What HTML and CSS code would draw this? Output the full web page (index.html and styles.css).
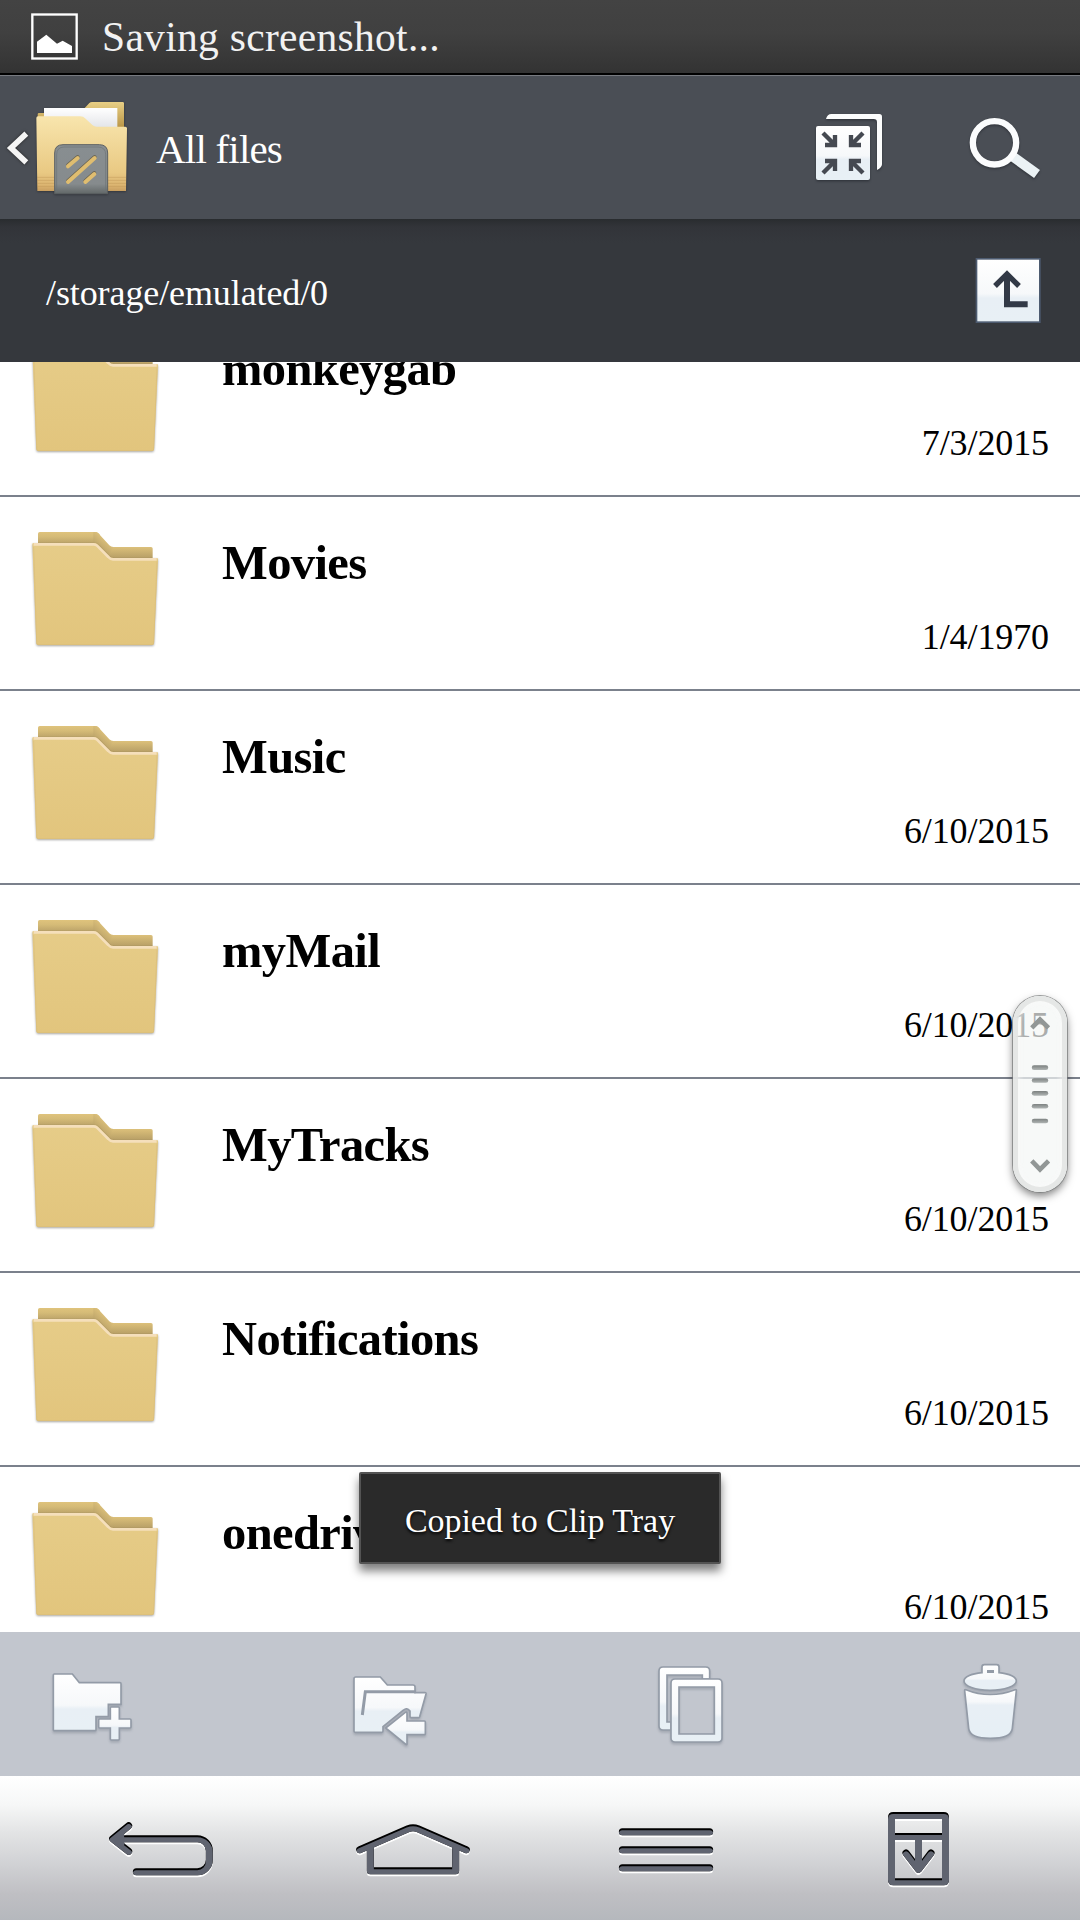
FILE: index.html
```html
<!DOCTYPE html>
<html lang="en">
<head>
    <meta charset="UTF-8">
    <meta name="viewport" content="width=device-width, initial-scale=1.0">
    <title>All files</title>
    <link rel="stylesheet" href="styles.css">
</head>
<body>
    <!-- Shared gradients, filters and the folder symbol -->
    <svg class="defs" aria-hidden="true">
        <defs>
            <linearGradient id="glass" x1="0" y1="0" x2="0" y2="1">
                <stop offset="0" stop-color="#ffffff"/>
                <stop offset="0.55" stop-color="#f6f8fa"/>
                <stop offset="0.62" stop-color="#e8eff5"/>
                <stop offset="1" stop-color="#e8f0f5"/>
            </linearGradient>
            <linearGradient id="trashBody" x1="0" y1="0" x2="0" y2="1">
                <stop offset="0" stop-color="#ffffff"/>
                <stop offset="0.25" stop-color="#f6f8fa"/>
                <stop offset="0.32" stop-color="#e8eff5"/>
                <stop offset="1" stop-color="#e6eff5"/>
            </linearGradient>
            <linearGradient id="folderFront" x1="0" y1="0" x2="0" y2="1">
                <stop offset="0" stop-color="#e6cc88"/>
                <stop offset="1" stop-color="#e2c57d"/>
            </linearGradient>
            <linearGradient id="folderBack" gradientUnits="userSpaceOnUse" x1="0" y1="96" x2="0" y2="132">
                <stop offset="0" stop-color="#dfc37c"/>
                <stop offset="0.4" stop-color="#d5bb77"/>
                <stop offset="1" stop-color="#b9a168"/>
            </linearGradient>
            <linearGradient id="folderBackLow" gradientUnits="userSpaceOnUse" x1="0" y1="141" x2="0" y2="176">
                <stop offset="0" stop-color="#dcc07a"/>
                <stop offset="1" stop-color="#b59d65"/>
            </linearGradient>
            <linearGradient id="folderSlope" gradientUnits="userSpaceOnUse" x1="320" y1="120" x2="296" y2="148">
                <stop offset="0" stop-color="#dcc07a"/>
                <stop offset="1" stop-color="#b9a168"/>
            </linearGradient>
            <linearGradient id="appFront" x1="0" y1="0" x2="0" y2="1">
                <stop offset="0" stop-color="#f8e5ad"/>
                <stop offset="0.75" stop-color="#e9c983"/>
                <stop offset="0.92" stop-color="#dcb571"/>
                <stop offset="1" stop-color="#c99f60"/>
            </linearGradient>
            <linearGradient id="appBack" x1="0" y1="0" x2="0" y2="1">
                <stop offset="0" stop-color="#e8cf85"/>
                <stop offset="1" stop-color="#b99445"/>
            </linearGradient>
            <linearGradient id="paper" x1="0" y1="0" x2="0" y2="1">
                <stop offset="0" stop-color="#ffffff"/>
                <stop offset="1" stop-color="#e2e4e8"/>
            </linearGradient>
            <linearGradient id="plate" x1="0" y1="0" x2="0" y2="1">
                <stop offset="0" stop-color="#888e91"/>
                <stop offset="0.8" stop-color="#868b8d"/>
                <stop offset="1" stop-color="#626868"/>
            </linearGradient>
            <linearGradient id="grip" x1="0" y1="0" x2="0" y2="1">
                <stop offset="0" stop-color="#7c8180"/>
                <stop offset="1" stop-color="#b0b5b4"/>
            </linearGradient>
            <!-- Engraved look of the navigation keys -->
            <filter id="engrave" x="-10%" y="-10%" width="120%" height="130%" color-interpolation-filters="sRGB">
                <feOffset in="SourceAlpha" dy="5" result="low"/>
                <feFlood flood-color="#ffffff"/>
                <feComposite in2="low" operator="in" result="light"/>
                <feOffset in="SourceAlpha" dy="6" result="inner"/>
                <feComposite in="SourceGraphic" in2="inner" operator="in" result="face"/>
                <feFlood flood-color="#000000"/>
                <feComposite in2="SourceAlpha" operator="in" result="dark"/>
                <feMerge>
                    <feMergeNode in="light"/>
                    <feMergeNode in="dark"/>
                    <feMergeNode in="face"/>
                </feMerge>
            </filter>
        </defs>
        <symbol id="folder" viewBox="78 -9 414 576">
            <path fill="url(#folderBack)" d="M114 101q0-5 5-5H286q5 0 9 4l5 5V180H114z"/>
            <path fill="url(#folderBackLow)" d="M320 141H453q5 0 5 5V186H320z"/>
            <path fill="url(#folderSlope)" d="M280 96h6q5 0 9 4l33 36q5 5 12 5l-14 34-46-45z"/>
            <path class="folder-front" d="M97 133q0-4 4-4H282q6 0 10 4L326 167q6 7 14 7H470q4 0 4 4L462 430q0 5-5 5H114q-5 0-5-5z"/>
            <path class="folder-edge" d="M101 133H281q6 0 10 4L325 171q6 7 14 7H470"/>
            <path class="folder-side" d="M101 140L110 428q0 6 5 6H456q5 0 5-6L471 184"/>
        </symbol>
    </svg>

    <div class="screen">
        <div class="status-bar">
            <svg class="status-icon" viewBox="93 39 141 141">
                <rect x="97" y="43.5" width="133" height="132" fill="none" stroke="#fff" stroke-width="7"/>
                <path fill="#fff" d="M111 125L139 104L171 131L188 122L216 138V159H111z"/>
            </svg>
            <span class="status-text">Saving screenshot...</span>
        </div>

        <div class="header">
            <svg class="app-icon" viewBox="0 228 390 429">
                <path class="back-chevron" d="M79 401L33 444L79 487"/>
                <g class="app-folder">
                    <path fill="url(#appBack)" d="M113 352V343q0-4 4-4H140V352zM252 326L268 309q3-3 8-3H368q4 0 4 4V384H252z"/>
                    <path fill="url(#paper)" d="M132 324H352V384H132z"/>
                    <path fill="url(#appFront)" d="M109 354q0-5 5-5H240q10 0 17 7l20 19q6 5 13 5h86q5 0 5 5L378 573H112z"/>
                    <path class="app-lines" d="M111 532H378M111 541H378M111 550H378M111 559H378"/>
                    <path fill="url(#plate)" stroke="#5c6063" stroke-width="3" d="M164 581V459q0-25 25-25H298q25 0 25 25V581z"/>
                    <path fill="none" stroke="#6d7275" stroke-width="2" d="M170 576V464q0-23 23-23H294q23 0 23 23V576"/>
                    <path class="slash-shadow" d="M204 496L233 471M204 543L284 471M256 543L283 519"/>
                    <path class="slash" d="M204 499L233 474M204 546L284 474M256 546L283 522"/>
                </g>
            </svg>
            <h1 class="title">All files</h1>
            <div class="header-actions">
                <svg class="action" viewBox="63 -12 288 429">
                    <g class="raised">
                        <path fill="#fcfdfd" d="M138 117q4-15 16-15h144q8 0 8 8v143q0 10-15 17V127q0-10-10-10z"/>
                        <rect x="108" y="138" width="162" height="162" rx="6" fill="url(#glass)"/>
                    </g>
                    <path class="cut" d="M129 159L162 192M165 165V195H135M249 159L216 192M213 165V195H243M129 279L162 246M165 273V243H135M249 279L216 246M213 273V243H243"/>
                </svg>
                <svg class="action" viewBox="531 -12 288 429">
                    <g class="raised">
                        <path stroke="#ebf2f5" stroke-width="30" d="M696 228L771 282"/>
                        <circle cx="643.5" cy="188.5" r="65" fill="none" stroke="#fbfcfd" stroke-width="19"/>
                    </g>
                </svg>
            </div>
        </div>

        <div class="path-bar">
            <span class="path-text">/storage/emulated/0</span>
            <svg class="action" viewBox="531 417 288 429">
                <rect x="589.5" y="536.5" width="190" height="190" fill="url(#glass)" stroke="#4d5b70" stroke-width="5"/>
                <path fill="none" stroke="#323946" stroke-width="18" d="M681 582V673H743"/>
                <path fill="none" stroke="#323946" stroke-width="16" d="M645 618L681 582L717 618"/>
            </svg>
        </div>

        <!-- File list -->
        <div class="file-list">
            <div class="file-row">
                <svg class="folder-icon"><use href="#folder"/></svg>
                <div class="file-info">
                    <span class="file-name">monkeygab</span>
                    <span class="file-date">7/3/2015</span>
                </div>
            </div>
            <div class="file-row">
                <svg class="folder-icon"><use href="#folder"/></svg>
                <div class="file-info">
                    <span class="file-name">Movies</span>
                    <span class="file-date">1/4/1970</span>
                </div>
            </div>
            <div class="file-row">
                <svg class="folder-icon"><use href="#folder"/></svg>
                <div class="file-info">
                    <span class="file-name">Music</span>
                    <span class="file-date">6/10/2015</span>
                </div>
            </div>
            <div class="file-row">
                <svg class="folder-icon"><use href="#folder"/></svg>
                <div class="file-info">
                    <span class="file-name">myMail</span>
                    <span class="file-date">6/10/2015</span>
                </div>
            </div>
            <div class="file-row">
                <svg class="folder-icon"><use href="#folder"/></svg>
                <div class="file-info">
                    <span class="file-name">MyTracks</span>
                    <span class="file-date">6/10/2015</span>
                </div>
            </div>
            <div class="file-row">
                <svg class="folder-icon"><use href="#folder"/></svg>
                <div class="file-info">
                    <span class="file-name">Notifications</span>
                    <span class="file-date">6/10/2015</span>
                </div>
            </div>
            <div class="file-row">
                <svg class="folder-icon"><use href="#folder"/></svg>
                <div class="file-info">
                    <span class="file-name">onedrive</span>
                    <span class="file-date">6/10/2015</span>
                </div>
            </div>
        </div>

        <!-- Toolbar -->
        <div class="toolbar">
            <svg class="tool" viewBox="90 36 360 432">
                <path d="M160 165q0-3 3-3H217L238 188H360q3 0 3 3V253H325V290H288V329q0 3-3 3H163q-3 0-3-3z"/>
                <path d="M331 264q0-3 3-3h21q3 0 3 3v33h32q3 0 3 3v21q0 3-3 3h-32v33q0 3-3 3h-21q-3 0-3-3v-33h-32q-3 0-3-3v-21q0-3 3-3h32z"/>
            </svg>
            <svg class="tool" viewBox="990 36 360 432">
                <path d="M1062 176q0-5 5-5H1141L1162 195H1239q6 0 6 6V218H1275q4 0 3 4L1259 290q-1 3-4 3H1234q-4 0-4-4V273Q1220 261 1211 270L1149 320V333q0 4-4 4H1066q-4 0-4-4z"/>
                <path class="fold" d="M1087 285L1096 215H1247"/>
                <path d="M1157 324L1216 277q5-3 5 2V303H1273q3 0 3 3V341q0 3-3 3H1221V371q0 5-5 1z"/>
            </svg>
            <svg class="tool" viewBox="90 36 360 432">
                <path d="M329 177V153q0-12-12-12H189q-12 0-12 12V318q0 12 12 12H213V306H201V165H307V177z"/>
                <path fill-rule="evenodd" d="M225 177H354q12 0 12 12V354q0 12-12 12H225q-12 0-12-12V189q0-12 12-12zM237 201V342H343V201z"/>
            </svg>
            <svg class="tool" viewBox="990 36 360 432">
                <path class="trash-body" d="M1094 212q-1-5 4-3Q1170 238 1245 209q5-2 4 3L1237 325Q1234 355 1171 355Q1109 355 1106 325z"/>
                <path d="M1146 158V141q0-7 7-7h37q7 0 7 7V158C1230 161 1249 172 1249 183C1249 198 1214 211 1170 211S1092 198 1092 183C1092 172 1112 161 1146 158z"/>
                <path class="hole" d="M1161 150h21v9h-21z"/>
            </svg>
        </div>

        <!-- Navigation keys -->
        <div class="nav-bar">
            <svg class="key" viewBox="282 468 408 432">
                <path filter="url(#engrave)" d="M386 617L338 656L386 694M342 656H592a36 36 0 0 1 36 36v27a36 36 0 0 1-36 36H409M362 645L345 656L362 667z"/>
            </svg>
            <svg class="key" viewBox="1038 468 408 432">
                <path filter="url(#engrave)" d="M1079 689L1224 626Q1239 620 1254 626L1399 689M1111 682V752H1367V682"/>
            </svg>
            <svg class="key" viewBox="-6 468 408 432">
                <path filter="url(#engrave)" d="M67 635H329M67 689H329M67 743H329"/>
            </svg>
            <svg class="key" viewBox="750 468 408 432">
                <path filter="url(#engrave)" d="M880 586.5H1031q5.5 0 5.5 5.5V780q0 5.5-5.5 5.5H880q-5.5 0-5.5-5.5V592q0-5.5 5.5-5.5zM885 649.5H1026M955.5 650V745M918 699L955.5 748L993 699"/>
            </svg>
        </div>

        <!-- Fast scroll thumb -->
        <div class="scroll-thumb">
            <svg viewBox="398 108 164 588">
                <path class="arrow" d="M455 201L480 176L506 201M455 605L480 631L506 605"/>
                <g fill="url(#grip)">
                    <rect x="455" y="315" width="50" height="14" rx="7"/>
                    <rect x="455" y="354" width="50" height="14" rx="7"/>
                    <rect x="455" y="393" width="50" height="14" rx="7"/>
                    <rect x="455" y="432" width="50" height="14" rx="7"/>
                    <rect x="455" y="477" width="50" height="14" rx="7"/>
                </g>
            </svg>
        </div>

        <div class="toast">Copied to Clip Tray</div>
    </div>
</body>
</html>
```
FILE: styles.css
```css
body {
    margin: 0;
    background-color: #fff;
    font-family: 'Liberation Serif', serif;
}

svg {
    display: block;
    flex: none;
}

.defs {
    position: absolute;
    width: 0;
    height: 0;
}

.screen {
    position: relative;
    display: flex;
    flex-direction: column;
    width: 1080px;
    height: 1920px;
    overflow: hidden;
}

/* Status bar */
.status-bar {
    display: flex;
    align-items: center;
    box-sizing: border-box;
    height: 75px;
    padding-left: 31px;
    border-bottom: 2px solid #000;
    background: linear-gradient(to bottom, #434343 0%, #404040 45%, #333 100%);
    color: #f2f2f2;
}

.status-icon {
    width: 47px;
    height: 47px;
}

.status-text {
    margin: 1px 0 0 24px;
    font-size: 41.5px;
    letter-spacing: 0.3px;
}

/* Header */
.header {
    display: flex;
    align-items: center;
    box-sizing: border-box;
    height: 144px;
    padding-right: 27px;
    border-top: 1px solid #777a80;
    background-color: #4a4e55;
}

.app-icon {
    width: 130px;
    height: 143px;
}

.back-chevron {
    fill: none;
    stroke: #f5f5f5;
    stroke-width: 17;
    filter: drop-shadow(0 0 4px #222);
}

.app-folder {
    filter: drop-shadow(0 2px 3px #2e3036);
}

.app-lines {
    stroke: #b98f52;
    stroke-width: 2;
    opacity: 0.6;
}

.slash,
.slash-shadow {
    fill: none;
    stroke: #dfbd70;
    stroke-width: 12;
    stroke-linecap: round;
}

.slash-shadow {
    stroke: #6b6552;
}

.title {
    margin: 3px 0 0 26px;
    color: #fff;
    font-size: 41px;
    font-weight: normal;
    letter-spacing: -0.8px;
}

.header-actions {
    display: flex;
    gap: 60px;
    margin-left: auto;
}

.action {
    width: 96px;
    height: 143px;
}

.raised {
    filter: drop-shadow(0 4px 3px rgba(30, 33, 40, 0.6));
}

.cut {
    fill: none;
    stroke: #454951;
    stroke-width: 13;
}

/* Current path */
.path-bar {
    display: flex;
    align-items: center;
    justify-content: space-between;
    height: 143px;
    padding: 0 27px 0 46px;
    background: linear-gradient(to bottom, #292c2f 0, #323439 8px, #35383d 24px);
}

.path-text {
    margin-top: 4px;
    color: #fff;
    font-size: 36px;
    letter-spacing: -0.1px;
}

/* File list */
.file-list {
    height: 1270px;
    overflow: hidden;
}

.file-row {
    display: flex;
    box-sizing: border-box;
    height: 194px;
    padding: 0 31px 0 26px;
    border-bottom: 2px solid #7b818c;
}

.file-row:first-child {
    margin-top: -59px;
}

.folder-icon {
    width: 138px;
    height: 192px;
}

.folder-front {
    fill: url(#folderFront);
    filter: drop-shadow(0 3px 3px rgba(0, 0, 0, 0.35));
}

.folder-edge {
    fill: none;
    stroke: #f5dfbb;
    stroke-width: 8;
}

.folder-side {
    fill: none;
    stroke: #d9bd79;
    stroke-width: 2;
}

.file-info {
    display: flex;
    flex: 1;
    flex-direction: column;
    padding: 40px 0 0 58px;
    color: #000;
}

.file-name {
    font-size: 48.5px;
    font-weight: bold;
    line-height: 51px;
    letter-spacing: -0.6px;
}

.file-date {
    align-self: flex-end;
    margin-top: 29px;
    font-size: 36px;
    line-height: 40px;
    letter-spacing: -0.1px;
}

/* Toolbar */
.toolbar {
    display: flex;
    justify-content: space-between;
    height: 144px;
    padding: 0 30px;
    background-color: #c2c6ce;
}

.tool {
    width: 120px;
    height: 144px;
    fill: url(#glass);
    stroke: #939ba7;
    stroke-width: 5;
    filter: drop-shadow(0 2px 1px rgba(120, 128, 140, 0.4));
}

.tool .trash-body {
    fill: url(#trashBody);
}

.tool .fold {
    fill: none;
    stroke-width: 9;
}

.tool .hole {
    fill: #939ba7;
    stroke: none;
}

/* Navigation keys */
.nav-bar {
    display: flex;
    justify-content: space-between;
    height: 144px;
    padding: 0 94px;
    background: linear-gradient(to bottom, #fff 0%, #f6f7f7 20%, #e2e3e4 40%, #cfd0d3 63%, #bfbfc3 82%, #b5b8bd 100%);
}

.key {
    width: 136px;
    height: 144px;
    fill: none;
    stroke: #606470;
    stroke-width: 21;
    stroke-linecap: round;
    stroke-linejoin: round;
}

/* Floating elements */
.scroll-thumb {
    position: absolute;
    top: 996px;
    left: 1013px;
    box-sizing: border-box;
    width: 54px;
    height: 196px;
    border-radius: 27px;
    background-color: rgba(244, 246, 245, 0.7);
    box-shadow: 0 0 0 1px rgba(120, 122, 122, 0.7), 0 4px 8px rgba(0, 0, 0, 0.5),
        inset 0 0 0 5px rgba(224, 226, 225, 0.8), inset 0 0 4px 8px rgba(250, 250, 250, 0.4);
}

.scroll-thumb svg {
    width: 54px;
    height: 196px;
}

.scroll-thumb .arrow {
    fill: none;
    stroke: #929796;
    stroke-width: 14;
}

.toast {
    position: absolute;
    top: 1472px;
    left: 359px;
    box-sizing: border-box;
    width: 362px;
    height: 92px;
    border: 2px solid #535353;
    border-radius: 2px;
    background-color: #2a2a2a;
    box-shadow: 0 7px 10px rgba(0, 0, 0, 0.5);
    color: #fff;
    font-size: 34px;
    line-height: 93px;
    letter-spacing: -0.05px;
    text-align: center;
    text-shadow: 0 2px 3px #000;
}
```
